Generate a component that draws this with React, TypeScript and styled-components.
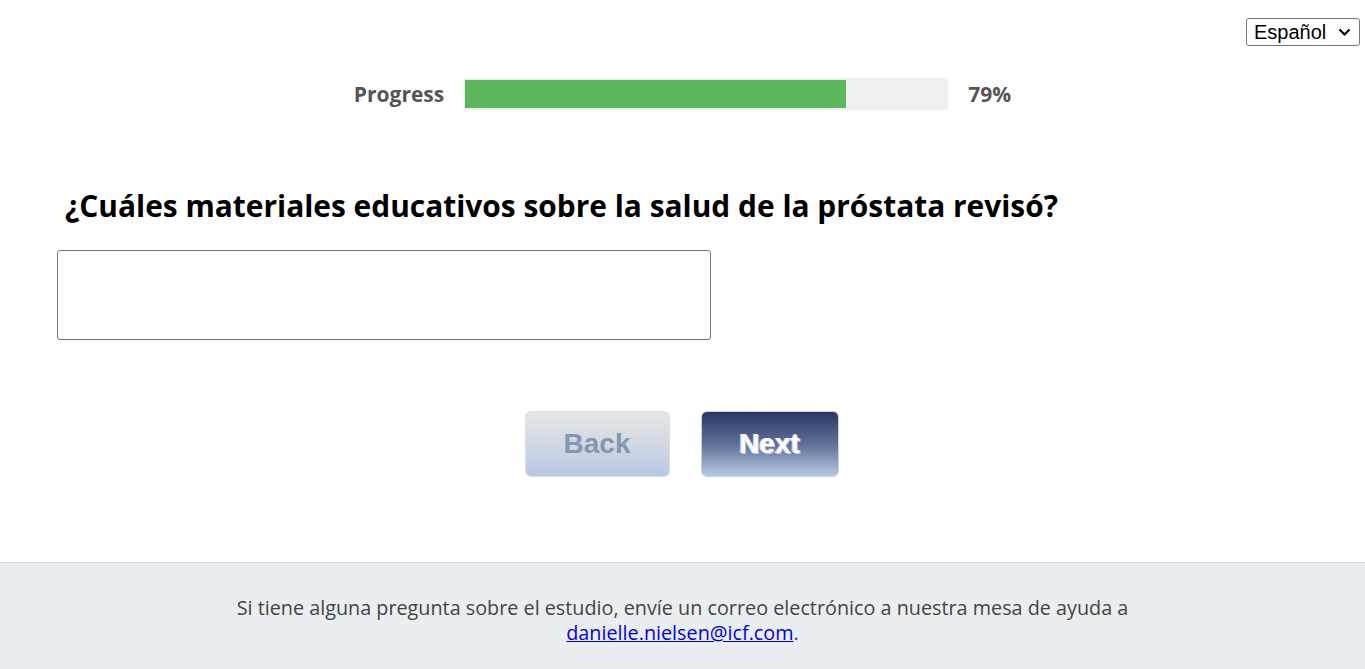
import React from "react";
import styled, { createGlobalStyle } from "styled-components";

const Global = createGlobalStyle`
  html, body { margin: 0; padding: 0; background: #fff; }
  body { font-family: "Open Sans", "Liberation Sans", sans-serif; }
`;

const Page = styled.div`
  display: flex;
  flex-direction: column;
  min-height: 669px;
`;

const TopBar = styled.div`
  display: flex;
  justify-content: flex-end;
  padding: 18px 5px 0 0;
  height: 28px;
`;

const SelectWrap = styled.div`
  position: relative;
  width: 114px;
  height: 28px;
`;

const LangSelect = styled.select`
  appearance: none;
  -webkit-appearance: none;
  box-sizing: border-box;
  font-family: "Liberation Sans", Arial, sans-serif;
  font-size: 20px;
  height: 28px;
  width: 114px;
  padding: 0 0 0 7px;
  border: 1px solid #767676;
  border-radius: 3px;
  background: #fff;
  color: #000;
`;

const Caret = styled.svg`
  position: absolute;
  right: 9px;
  top: 10px;
  width: 13px;
  height: 9px;
  pointer-events: none;
`;

const ProgressRow = styled.div`
  display: flex;
  align-items: center;
  justify-content: center;
  gap: 20px;
  margin-top: 32px;
`;

const ProgressLabel = styled.span`
  font-weight: 700;
  font-size: 21px;
  color: #555;
`;

const Track = styled.div`
  width: 482px;
  height: 28px;
  padding: 2px 1px;
  background: #f0f0f0;
`;

const Fill = styled.div`
  height: 100%;
  background: #5cb85c;
`;

const Main = styled.div`
  padding: 0 57px;
  flex: 1;
`;

const Question = styled.h2`
  margin: 75px 0 0 8px;
  font-size: 29.9px;
  font-weight: 700;
  color: #000;
  line-height: 42px;
`;

const Answer = styled.textarea`
  display: block;
  box-sizing: border-box;
  width: 654px;
  height: 90px;
  margin-top: 23px;
  border: 1px solid #767676;
  border-radius: 3px;
  resize: none;
  font-family: inherit;
`;

const Buttons = styled.div`
  display: flex;
  justify-content: center;
  gap: 31px;
  margin-top: 71px;
  padding-right: 2px;
`;

const NavButton = styled.button<{ $primary?: boolean }>`
  box-sizing: border-box;
  height: 66px;
  width: ${(p) => (p.$primary ? "138px" : "145px")};
  border: 1px solid ${(p) => (p.$primary ? "#c9d2e3" : "#dcdfe6")};
  border-radius: 6px;
  font-family: "Liberation Sans", Arial, sans-serif;
  font-weight: 700;
  font-size: 28px;
  cursor: pointer;
  background: ${(p) =>
    p.$primary
      ? "linear-gradient(to bottom, #2a3765 0%, #5f7099 50%, #b8c8e2 100%)"
      : "linear-gradient(to bottom, #e6e6e8 0%, #d2d8e3 50%, #b8c9e3 100%)"};
  color: ${(p) => (p.$primary ? "#fff" : "#8496b3")};
  text-shadow: ${(p) => (p.$primary ? "1px 1px 0 #d6c4ee, -1px 0 0 #b7d6f5" : "none")};
`;

const Footer = styled.footer`
  margin-top: 84px;
  background: #ebeef1;
  border-top: 1px solid #d9dde2;
  height: 107px;
  box-sizing: border-box;
  padding-top: 32px;
  text-align: center;
  font-size: 19.8px;
  line-height: 25px;
  color: #444;
`;

const Link = styled.a`
  color: #0000ee;
  text-decoration: underline;
`;

export default function App() {
  const pct = 79;
  return (
    <>
      <Global />
      <Page>
        <TopBar>
          <SelectWrap>
            <LangSelect defaultValue="es">
              <option value="es">Español</option>
              <option value="en">English</option>
            </LangSelect>
            <Caret viewBox="0 0 13 9">
              <path d="M1.5 1.5 L6.5 6.5 L11.5 1.5" fill="none" stroke="#000" strokeWidth="2.2" />
            </Caret>
          </SelectWrap>
        </TopBar>
        <ProgressRow>
          <ProgressLabel>Progress</ProgressLabel>
          <Track>
            <Fill style={{ width: `${pct}%` }} />
          </Track>
          <ProgressLabel>{pct}%</ProgressLabel>
        </ProgressRow>
        <Main>
          <Question>¿Cuáles materiales educativos sobre la salud de la próstata revisó?</Question>
          <Answer />
          <Buttons>
            <NavButton>Back</NavButton>
            <NavButton $primary>Next</NavButton>
          </Buttons>
        </Main>
        <Footer>
          Si tiene alguna pregunta sobre el estudio, envíe un correo electrónico a nuestra mesa de ayuda a
          <br />
          <Link href="mailto:danielle.nielsen@icf.com">danielle.nielsen@icf.com</Link>.
        </Footer>
      </Page>
    </>
  );
}
